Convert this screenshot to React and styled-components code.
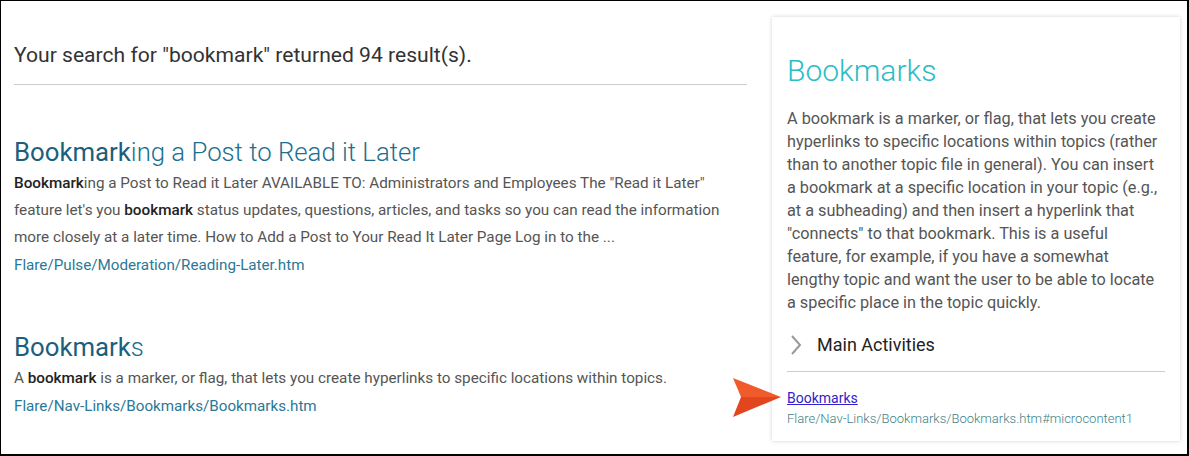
import React from "react";
import styled, { createGlobalStyle } from "styled-components";

const Global = createGlobalStyle`
  html, body { margin: 0; padding: 0; background: #fff; }
  body { font-family: Roboto, "Noto Sans", Arial, sans-serif; }
  * { box-sizing: border-box; }
`;

const Frame = styled.div`
  width: 1189px;
  height: 456px;
  border: 1px solid #000;
  border-right-width: 2px;
  border-bottom-width: 2px;
  display: flex;
  align-items: flex-start;
  background: #fff;
  position: relative;
  overflow: hidden;
`;

const Results = styled.main`
  width: 746px;
  padding: 40px 0 0 13px;
`;

const SearchHeading = styled.h1`
  margin: 0;
  font-size: 21.1px;
  font-weight: 400;
  color: #333;
  line-height: 28px;
  padding-bottom: 15px;
  border-bottom: 1px solid #ccc;
`;

const ResultList = styled.div`
  display: flex;
  flex-direction: column;
  gap: 52px;
  padding-top: 51px;
`;

const Result = styled.article`
  display: flex;
  flex-direction: column;
  max-width: 722px;
`;

const ResultTitle = styled.h2`
  margin: 0 0 2px;
  font-size: 25.75px;
  font-weight: 300;
  color: #1c6f8f;
  line-height: 32px;
  b { font-weight: 400; color: #1b5f7d; }
`;

const Snippet = styled.p`
  margin: 0;
  font-size: 15.25px;
  font-weight: 400;
  color: #555;
  line-height: 27px;
  b { font-weight: 500; color: #222; }
`;

const Path = styled.div`
  margin-top: 1px;
  font-size: 15.2px;
  font-weight: 400;
  color: #2a7897;
  line-height: 27px;
`;

const Card = styled.aside`
  margin: 16px 0 0 25px;
  width: 408px;
  height: 424px;
  background: #fff;
  box-shadow: 0 0 4px rgba(0,0,0,0.18);
  padding: 36px 15px 0 15px;
  display: flex;
  flex-direction: column;
  position: relative;
`;

const CardTitle = styled.h2`
  margin: 0;
  font-size: 30px;
  font-weight: 300;
  color: #2bbcc5;
  line-height: 36px;
`;

const CardText = styled.p`
  margin: 18px 0 0;
  font-size: 16.25px;
  font-weight: 400;
  color: #555;
  line-height: 23px;
`;

const Accordion = styled.div`
  margin-top: 18px;
  display: flex;
  align-items: center;
  gap: 14px;
  padding: 0 0 13px 2px;
  border-bottom: 1px solid #ccc;
  font-size: 18px;
  font-weight: 400;
  color: #222;
  line-height: 26px;
`;

const LinkBlock = styled.div`
  padding-top: 17px;
  display: flex;
  flex-direction: column;
`;

const MicroLink = styled.a`
  align-self: flex-start;
  font-size: 14px;
  font-weight: 400;
  color: #3322cc;
  text-decoration: underline;
  line-height: 18px;
`;

const MicroPath = styled.div`
  font-size: 13px;
  font-weight: 300;
  color: #3d7f86;
  line-height: 23px;
`;

const Pointer = styled.svg`
  position: absolute;
  left: -40px;
  top: 360px;
`;

export default function App() {
  return (
    <>
      <Global />
      <Frame>
        <Results>
          <SearchHeading>Your search for "bookmark" returned 94 result(s).</SearchHeading>
          <ResultList>
            <Result>
              <ResultTitle><b>Bookmark</b>ing a Post to Read it Later</ResultTitle>
              <Snippet>
                <b>Bookmark</b>ing a Post to Read it Later AVAILABLE TO: Administrators and Employees The "Read it Later" feature let's you <b>bookmark</b> status updates, questions, articles, and tasks so you can read the information more closely at a later time. How to Add a Post to Your Read It Later Page Log in to the ...
              </Snippet>
              <Path>Flare/Pulse/Moderation/Reading-Later.htm</Path>
            </Result>
            <Result>
              <ResultTitle><b>Bookmark</b>s</ResultTitle>
              <Snippet>
                A <b>bookmark</b> is a marker, or flag, that lets you create hyperlinks to specific locations within topics.
              </Snippet>
              <Path>Flare/Nav-Links/Bookmarks/Bookmarks.htm</Path>
            </Result>
          </ResultList>
        </Results>
        <Card>
          <CardTitle>Bookmarks</CardTitle>
          <CardText>
            A bookmark is a marker, or flag, that lets you create hyperlinks to specific locations within topics (rather than to another topic file in general). You can insert a bookmark at a specific location in your topic (e.g., at a subheading) and then insert a hyperlink that "connects" to that bookmark. This is a useful feature, for example, if you have a somewhat lengthy topic and want the user to be able to locate a specific place in the topic quickly.
          </CardText>
          <Accordion>
            <svg width="14" height="22" viewBox="0 0 14 22">
              <path d="M3 2 L11 11 L3 20" fill="none" stroke="#999" strokeWidth="2" />
            </svg>
            Main Activities
          </Accordion>
          <LinkBlock>
            <MicroLink href="#">Bookmarks</MicroLink>
            <MicroPath>Flare/Nav-Links/Bookmarks/Bookmarks.htm#microcontent1</MicroPath>
          </LinkBlock>
          <Pointer width="50" height="42" viewBox="0 0 50 42">
            <polygon points="1,1 49,20 9,20" fill="#f15a2b" />
            <polygon points="9,20 49,20 1,40" fill="#e2461e" />
          </Pointer>
        </Card>
      </Frame>
    </>
  );
}
